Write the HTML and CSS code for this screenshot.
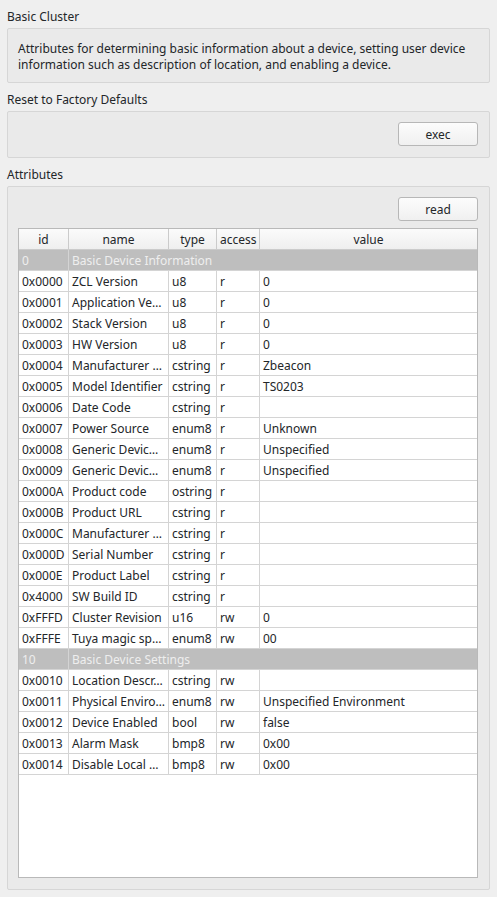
FILE: index.html
```html
<!DOCTYPE html>
<html>
<head>
    <meta charset="UTF-8">
    <title>Basic Cluster</title>
    <link rel="stylesheet" href="styles.css">
</head>
<body>
    <div class="title">Basic Cluster</div>
    <div class="group desc">Attributes for determining basic information about a device, setting user device information such as description of location, and enabling a device.</div>

    <div class="title">Reset to Factory Defaults</div>
    <div class="group actions">
        <button class="btn">exec</button>
    </div>

    <div class="title">Attributes</div>
    <div class="group attributes">
        <div class="actions-inline">
            <button class="btn">read</button>
        </div>
        <div class="table">
            <div class="row head">
                <div class="cell">id</div>
                <div class="cell">name</div>
                <div class="cell">type</div>
                <div class="cell">access</div>
                <div class="cell">value</div>
            </div>
            <div class="row section">
                <div class="cell">0</div>
                <div class="cell span">Basic Device Information</div>
            </div>
            <div class="row"><div class="cell">0x0000</div><div class="cell">ZCL Version</div><div class="cell">u8</div><div class="cell">r</div><div class="cell">0</div></div>
            <div class="row"><div class="cell">0x0001</div><div class="cell">Application Ve…</div><div class="cell">u8</div><div class="cell">r</div><div class="cell">0</div></div>
            <div class="row"><div class="cell">0x0002</div><div class="cell">Stack Version</div><div class="cell">u8</div><div class="cell">r</div><div class="cell">0</div></div>
            <div class="row"><div class="cell">0x0003</div><div class="cell">HW Version</div><div class="cell">u8</div><div class="cell">r</div><div class="cell">0</div></div>
            <div class="row"><div class="cell">0x0004</div><div class="cell">Manufacturer …</div><div class="cell">cstring</div><div class="cell">r</div><div class="cell">Zbeacon</div></div>
            <div class="row"><div class="cell">0x0005</div><div class="cell">Model Identifier</div><div class="cell">cstring</div><div class="cell">r</div><div class="cell">TS0203</div></div>
            <div class="row"><div class="cell">0x0006</div><div class="cell">Date Code</div><div class="cell">cstring</div><div class="cell">r</div><div class="cell"></div></div>
            <div class="row"><div class="cell">0x0007</div><div class="cell">Power Source</div><div class="cell">enum8</div><div class="cell">r</div><div class="cell">Unknown</div></div>
            <div class="row"><div class="cell">0x0008</div><div class="cell">Generic Devic…</div><div class="cell">enum8</div><div class="cell">r</div><div class="cell">Unspecified</div></div>
            <div class="row"><div class="cell">0x0009</div><div class="cell">Generic Devic…</div><div class="cell">enum8</div><div class="cell">r</div><div class="cell">Unspecified</div></div>
            <div class="row"><div class="cell">0x000A</div><div class="cell">Product code</div><div class="cell">ostring</div><div class="cell">r</div><div class="cell"></div></div>
            <div class="row"><div class="cell">0x000B</div><div class="cell">Product URL</div><div class="cell">cstring</div><div class="cell">r</div><div class="cell"></div></div>
            <div class="row"><div class="cell">0x000C</div><div class="cell">Manufacturer …</div><div class="cell">cstring</div><div class="cell">r</div><div class="cell"></div></div>
            <div class="row"><div class="cell">0x000D</div><div class="cell">Serial Number</div><div class="cell">cstring</div><div class="cell">r</div><div class="cell"></div></div>
            <div class="row"><div class="cell">0x000E</div><div class="cell">Product Label</div><div class="cell">cstring</div><div class="cell">r</div><div class="cell"></div></div>
            <div class="row"><div class="cell">0x4000</div><div class="cell">SW Build ID</div><div class="cell">cstring</div><div class="cell">r</div><div class="cell"></div></div>
            <div class="row"><div class="cell">0xFFFD</div><div class="cell">Cluster Revision</div><div class="cell">u16</div><div class="cell">rw</div><div class="cell">0</div></div>
            <div class="row"><div class="cell">0xFFFE</div><div class="cell">Tuya magic sp…</div><div class="cell">enum8</div><div class="cell">rw</div><div class="cell">00</div></div>
            <div class="row section">
                <div class="cell">10</div>
                <div class="cell span">Basic Device Settings</div>
            </div>
            <div class="row"><div class="cell">0x0010</div><div class="cell">Location Descr…</div><div class="cell">cstring</div><div class="cell">rw</div><div class="cell"></div></div>
            <div class="row"><div class="cell">0x0011</div><div class="cell">Physical Enviro…</div><div class="cell">enum8</div><div class="cell">rw</div><div class="cell">Unspecified Environment</div></div>
            <div class="row"><div class="cell">0x0012</div><div class="cell">Device Enabled</div><div class="cell">bool</div><div class="cell">rw</div><div class="cell">false</div></div>
            <div class="row"><div class="cell">0x0013</div><div class="cell">Alarm Mask</div><div class="cell">bmp8</div><div class="cell">rw</div><div class="cell">0x00</div></div>
            <div class="row"><div class="cell">0x0014</div><div class="cell">Disable Local …</div><div class="cell">bmp8</div><div class="cell">rw</div><div class="cell">0x00</div></div>
        </div>
    </div>
</body>
</html>
```

FILE: styles.css
```css
html, body {
    margin: 0;
}

body {
    height: 897px;
    box-sizing: border-box;
    padding: 8px 7px 7px 7px;
    display: flex;
    flex-direction: column;
    font-family: "Noto Sans", sans-serif;
    font-size: 12px;
    line-height: 16px;
    color: #232629;
    background: #efefef;
}

.title {
    height: 15px;
    padding-top: 1px;
    margin-bottom: 4px;
}

.group {
    border: 1px solid #d6d6d6;
    border-radius: 2px;
    background: #eaeaea;
    margin-bottom: 8px;
}

.desc {
    padding: 12px 11px 9px 10px;
}

.actions {
    display: flex;
    justify-content: flex-end;
    padding: 10px 11px 11px 10px;
}

.attributes {
    flex: 1;
    display: flex;
    flex-direction: column;
    padding: 10px 11px 11px 10px;
    margin-bottom: 0;
}

.actions-inline {
    display: flex;
    justify-content: flex-end;
    margin-bottom: 7px;
}

.btn {
    width: 80px;
    height: 24px;
    padding: 1px 0 0 0;
    border: 1px solid #b7b7b7;
    border-radius: 3px;
    background: linear-gradient(to bottom, #fcfcfc, #f0f0f0);
    font-family: inherit;
    font-size: 12px;
    color: #232629;
}

.table {
    flex: 1;
    border: 1px solid #b9b9b9;
    background: white;
}

.row {
    display: grid;
    grid-template-columns: 50px 100px 48px 43px 1fr;
    height: 21px;
}

.cell {
    box-sizing: border-box;
    border-right: 1px solid #d4d4d4;
    border-bottom: 1px solid #d4d4d4;
    padding: 2px 3px 0 3px;
    line-height: 18px;
    white-space: nowrap;
    overflow: hidden;
}

.cell:last-child {
    border-right: none;
}

.head {
    background: linear-gradient(to bottom, #fbfbfb, #eeeeee);
}

.head .cell {
    text-align: center;
    border-color: #cbcbcb;
}

.section {
    background: #bebebe;
    color: #eeeeee;
}

.section .span {
    grid-column: 2 / 6;
}
```
